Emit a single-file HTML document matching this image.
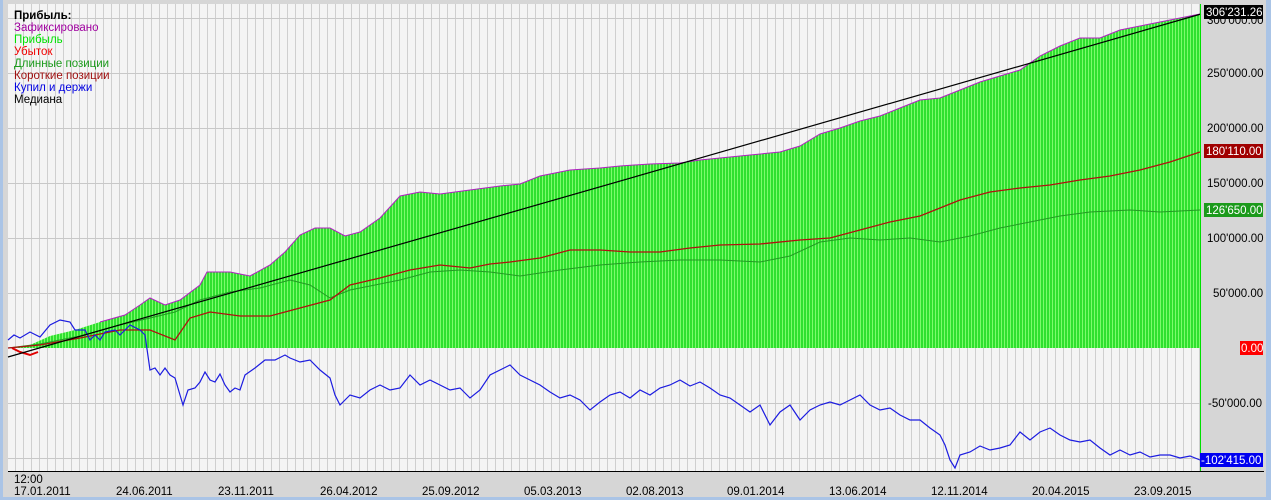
<!DOCTYPE html>
<html><head><meta charset="utf-8"><style>
body{margin:0;width:1271px;height:500px;overflow:hidden;background:#fff;font-family:"Liberation Sans","DejaVu Sans",sans-serif}
svg{display:block}
text{font-family:"Liberation Sans","DejaVu Sans",sans-serif;font-size:11.5px}
</style></head><body>
<svg width="1271" height="500" xmlns="http://www.w3.org/2000/svg">
<defs>
<pattern id="vg" x="8" y="0" width="8" height="10" patternUnits="userSpaceOnUse"><rect width="8" height="10" fill="#f4f4f4"/><rect x="7" width="1" height="10" fill="#cfcfcf"/></pattern>
<pattern id="gs" x="0" y="0" width="3" height="10" patternUnits="userSpaceOnUse"><rect width="3" height="10" fill="#2fe02f"/><rect x="2" width="1" height="10" fill="#7cfb6c"/></pattern>
</defs>
<rect width="1271" height="500" fill="#d6d6d6"/>
<rect x="0" y="0" width="3" height="500" fill="#aac4e6"/>
<rect x="1266" y="0" width="5" height="500" fill="#aac4e6"/>
<rect x="0" y="497" width="1271" height="3" fill="#aac4e6"/>
<rect x="8" y="4" width="1193" height="467" fill="url(#vg)"/>
<g stroke="#c8c8c8" stroke-width="1">
<line x1="8" x2="1201" y1="18.5" y2="18.5"/><line x1="8" x2="1201" y1="73.5" y2="73.5"/><line x1="8" x2="1201" y1="128.5" y2="128.5"/><line x1="8" x2="1201" y1="183.5" y2="183.5"/><line x1="8" x2="1201" y1="238.5" y2="238.5"/><line x1="8" x2="1201" y1="293.5" y2="293.5"/><line x1="8" x2="1201" y1="403.5" y2="403.5"/><line x1="8" x2="1201" y1="458.5" y2="458.5"/>
</g>
<polygon fill="url(#gs)" points="8,348 30,345 50,336 75,330 100,322 125,315 140,305 150,298 165,305 180,300 200,285 207,272 230,272 250,276 270,265 285,252 300,235 315,228 330,228 345,236 360,232 380,218 400,196 420,192 440,194 470,190 500,186 520,184 540,176 570,170 600,168 620,166 650,164 680,163 700,160 720,158 750,155 780,152 800,146 820,134 840,128 860,121 880,116 900,108 920,100 940,98 960,90 980,82 1000,76 1020,70 1040,56 1060,46 1080,38 1100,38 1120,30 1140,26 1160,22 1180,18 1200,14 1200,348"/>
<polyline fill="none" stroke="#b020c0" stroke-width="1" points="100,322 125,315 140,305 150,298 165,305 180,300 200,285 207,272 230,272 250,276 270,265 285,252 300,235 315,228 330,228 345,236 360,232 380,218 400,196 420,192 440,194 470,190 500,186 520,184 540,176 570,170 600,168 620,166 650,164 680,163 700,160 720,158 750,155 780,152 800,146 820,134 840,128 860,121 880,116 900,108 920,100 940,98 960,90 980,82 1000,76 1020,70 1040,56 1060,46 1080,38 1100,38 1120,30 1140,26 1160,22 1180,18 1200,14"/>
<polyline fill="none" stroke="#e00000" stroke-width="2" points="12,348 20,352 30,355 38,352"/>
<polyline fill="none" stroke="#239a23" stroke-width="1" points="8,348 40,344 80,336 120,325 150,318 175,312 200,300 230,292 260,288 290,280 310,285 330,298 350,290 380,284 400,280 430,272 460,270 490,272 520,276 560,270 600,265 640,262 680,260 720,260 760,262 790,256 820,242 850,238 880,240 910,238 940,242 970,236 1000,228 1030,222 1060,216 1090,212 1130,210 1160,212 1200,210"/>
<polyline fill="none" stroke="#b01010" stroke-width="1.3" points="8,348 40,345 80,338 120,330 150,330 175,340 190,318 210,312 240,316 270,316 300,308 330,300 350,285 380,278 410,270 440,265 470,268 490,264 510,262 540,258 570,250 600,250 630,252 660,252 690,248 720,245 760,244 800,240 830,238 860,230 890,222 920,216 940,208 960,200 990,192 1020,188 1050,185 1080,180 1110,176 1140,170 1170,162 1200,152"/>
<polyline fill="none" stroke="#1c1ce0" stroke-width="1.2" points="8,340 14,335 20,338 30,332 40,337 50,325 60,320 70,322 75,330 85,330 90,340 95,335 100,340 105,332 115,330 120,335 125,330 130,325 140,330 145,335 150,370 155,368 160,375 165,368 170,375 175,378 180,395 183,405 188,390 195,388 200,382 205,372 210,380 215,382 220,374 225,385 230,392 235,388 240,390 245,375 255,368 265,360 275,360 285,355 290,358 300,362 310,360 320,370 330,378 335,395 340,405 345,400 350,395 360,398 370,390 380,385 390,390 400,388 410,375 420,385 430,380 440,385 450,390 460,388 470,398 480,390 490,375 500,370 510,365 520,375 530,380 540,385 550,392 560,398 570,395 580,400 590,410 600,402 610,395 620,392 630,398 640,390 650,395 660,388 670,385 680,380 690,386 700,382 710,388 720,395 730,398 740,405 750,412 760,405 770,425 780,412 790,405 800,420 810,410 820,405 830,402 840,405 850,400 860,395 870,405 880,410 890,408 900,415 910,420 920,420 930,428 940,435 945,445 950,460 955,468 960,455 970,452 980,446 990,450 1000,448 1010,445 1020,432 1030,440 1040,432 1050,428 1060,435 1070,440 1080,442 1090,440 1100,448 1110,455 1120,450 1130,455 1140,452 1150,457 1160,455 1170,455 1180,458 1190,456 1200,460"/>
<line x1="8" y1="357" x2="1201" y2="14" stroke="#000" stroke-width="1.2"/>
<line x1="8" y1="471.5" x2="1264" y2="471.5" stroke="#000"/>
<line x1="1200.5" y1="4" x2="1200.5" y2="471" stroke="#00e000"/>
<g fill="#000">
<text x="1207" y="24">300'000.00</text><text x="1207" y="77">250'000.00</text><text x="1207" y="132">200'000.00</text><text x="1207" y="187">150'000.00</text><text x="1207" y="242">100'000.00</text><text x="1213" y="297">50'000.00</text><text x="1208" y="407">-50'000.00</text>
</g>
<rect x="1204" y="5" width="59" height="14" fill="#000"/><text x="1206" y="16" fill="#fff">306'231.26</text>
<rect x="1204" y="144" width="59" height="14" fill="#a00000"/><text x="1206" y="155" fill="#fff">180'110.00</text>
<rect x="1204" y="203" width="59" height="14" fill="#1b9a1b"/><text x="1206" y="214" fill="#fff">126'650.00</text>
<rect x="1240" y="341" width="23" height="14" fill="#f00"/><text x="1241" y="352" fill="#fff">0.00</text>
<rect x="1200" y="453" width="63" height="14" fill="#0000f0"/><text x="1201" y="464" fill="#fff">-102'415.00</text>
<g fill="#000">
<text x="14" y="483">12:00</text>
<text x="14" y="495">17.01.2011</text><text x="116" y="495">24.06.2011</text><text x="218" y="495">23.11.2011</text><text x="320" y="495">26.04.2012</text><text x="422" y="495">25.09.2012</text><text x="524" y="495">05.03.2013</text><text x="626" y="495">02.08.2013</text><text x="727" y="495">09.01.2014</text><text x="829" y="495">13.06.2014</text><text x="931" y="495">12.11.2014</text><text x="1032" y="495">20.04.2015</text><text x="1134" y="495">23.09.2015</text>
</g>
<g font-size="11">
<text x="14" y="19" font-weight="bold" fill="#000">Прибыль:</text>
<text x="14" y="31" fill="#a000a0">Зафиксировано</text>
<text x="14" y="43" fill="#00e000">Прибыль</text>
<text x="14" y="55" fill="#f00000">Убыток</text>
<text x="14" y="67" fill="#1b9a1b">Длинные позиции</text>
<text x="14" y="79" fill="#a01010">Короткие позиции</text>
<text x="14" y="91" fill="#0000e0">Купил и держи</text>
<text x="14" y="103" fill="#000">Медиана</text>
</g>
</svg>
</body></html>
